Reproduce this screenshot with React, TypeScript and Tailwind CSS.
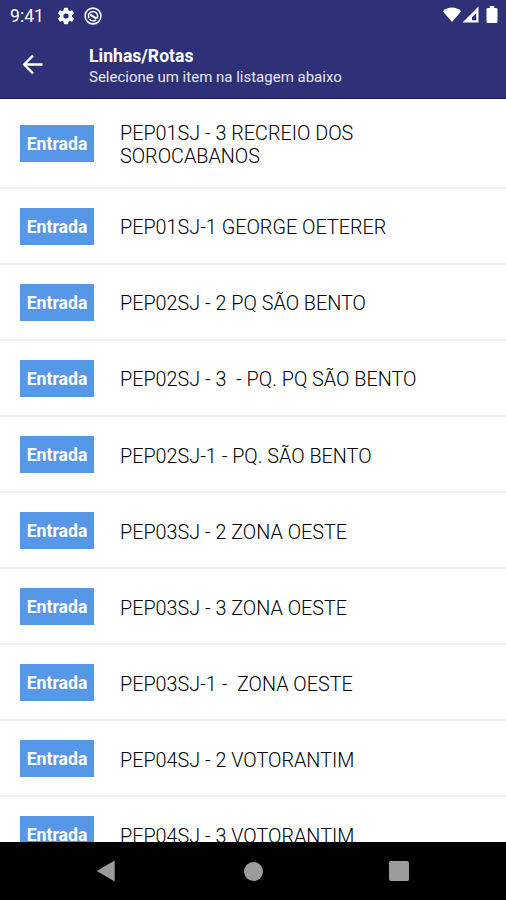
type RouteItem = {
  id: number;
  label: string;
  tall?: boolean;
};

const routes: RouteItem[] = [
  { id: 1, label: "PEP01SJ - 3 RECREIO DOS SOROCABANOS", tall: true },
  { id: 2, label: "PEP01SJ-1 GEORGE OETERER" },
  { id: 3, label: "PEP02SJ - 2 PQ SÃO BENTO" },
  { id: 4, label: "PEP02SJ - 3  - PQ. PQ SÃO BENTO" },
  { id: 5, label: "PEP02SJ-1 - PQ. SÃO BENTO" },
  { id: 6, label: "PEP03SJ - 2 ZONA OESTE" },
  { id: 7, label: "PEP03SJ - 3 ZONA OESTE" },
  { id: 8, label: "PEP03SJ-1 -  ZONA OESTE" },
  { id: 9, label: "PEP04SJ - 2 VOTORANTIM" },
  { id: 10, label: "PEP04SJ - 3 VOTORANTIM" },
];

function StatusBar() {
  return (
    <div className="flex h-8 items-center pl-2.5 pr-2 text-white">
      <span className="w-[46px] text-[17.6px] leading-8">9:41</span>
      <svg className="ml-px size-[18px]" viewBox="1 1 22 22" fill="currentColor">
        <path
          fillRule="evenodd"
          d="M19.43 12.98c.04-.32.07-.64.07-.98s-.03-.66-.07-.98l2.11-1.65a.5.5 0 0 0 .12-.64l-2-3.46a.5.5 0 0 0-.61-.22l-2.49 1a7.3 7.3 0 0 0-1.69-.98l-.38-2.65A.49.49 0 0 0 14 2h-4a.49.49 0 0 0-.49.42l-.38 2.65c-.61.25-1.17.59-1.69.98l-2.49-1a.5.5 0 0 0-.61.22l-2 3.46a.49.49 0 0 0 .12.64l2.11 1.65c-.04.32-.07.65-.07.98s.03.66.07.98l-2.11 1.65a.5.5 0 0 0-.12.64l2 3.46c.12.22.39.3.61.22l2.49-1c.52.4 1.08.73 1.69.98l.38 2.65c.03.24.24.42.49.42h4c.25 0 .46-.18.49-.42l.38-2.65c.61-.25 1.17-.59 1.69-.98l2.49 1c.23.09.49 0 .61-.22l2-3.46a.5.5 0 0 0-.12-.64zM12 15.2a3.2 3.2 0 1 1 0-6.4 3.2 3.2 0 0 1 0 6.4z"
        />
      </svg>
      <svg className="ml-[9px] size-[18px]" viewBox="0 0 18 18" fill="none" stroke="currentColor">
        <circle cx="9" cy="9" r="7.9" strokeWidth="1.6" />
        <path d="M5 11.2A4.6 4.6 0 1 1 13 11.3" strokeWidth="1.5" />
        <path d="M6.2 7.6 12.6 11.6" strokeWidth="2" />
        <path d="M5.6 12.2a4.6 4.6 0 0 0 6.4.6" strokeWidth="1.6" />
      </svg>
      <div className="ml-auto flex items-center pb-[3px]">
        <svg className="h-[17px] w-[20px]" viewBox="0 0 21 17" fill="currentColor">
          <path d="M.8 5C6.2-.1 14.8-.1 20.2 5L10.5 16.5z" />
        </svg>
        <svg className="h-[17px] w-[17px]" viewBox="0 0 17 17">
          <path fill="currentColor" fillRule="evenodd" d="M.5 16.5 16.5.5v16zM10 14.3h4.2V7.5L10 11.3z" />
        </svg>
        <svg className="ml-[7px] h-[17px] w-[12px]" viewBox="0 0 12 17" fill="currentColor">
          <path d="M3.8 0h4.4v2h2Q11.5 2 11.5 3.3v12.2Q11.5 17 10.2 17H1.8Q.5 17 .5 15.5V3.3Q.5 2 1.8 2h2z" />
        </svg>
      </div>
    </div>
  );
}

function Header() {
  return (
    <header className="h-[99px] shrink-0 border-b border-[#171759] bg-[#2e3078] text-white">
      <StatusBar />
      <div className="flex h-[65px] items-center pl-[22px]">
        <button type="button" aria-label="Voltar" className="w-[67px]">
          <svg className="size-[21px]" viewBox="0 0 21 21" fill="none" stroke="currentColor" strokeWidth="2.3">
            <path d="M20.5 10.5H2.2M11 1.6l-8.9 8.9 8.9 8.9" />
          </svg>
        </button>
        <div className="pt-1">
          <h1 className="text-[17.6px] font-bold leading-[22px]">Linhas/Rotas</h1>
          <p className="text-[15px] leading-[21px] text-[#e7e7f4]">Selecione um item na listagem abaixo</p>
        </div>
      </div>
    </header>
  );
}

function RouteRow({ route }: { route: RouteItem }) {
  return (
    <li
      className={`flex shrink-0 items-center border-b-2 border-[#eeeeee] pl-5 pt-[1.2px] ${
        route.tall ? "h-[89.6px]" : "h-[76.1px]"
      }`}
    >
      <span className="flex h-[37px] w-[74px] shrink-0 items-center justify-center bg-[#5797e8] pt-px text-[17.6px] font-bold text-white">
        Entrada
      </span>
      <span className="ml-[26px] w-[310px] whitespace-pre-wrap pt-[3px] text-[19.8px] font-light leading-[23px] text-black">
        {route.label}
      </span>
    </li>
  );
}

function NavBar() {
  return (
    <nav className="flex h-[58px] shrink-0 items-center justify-between bg-black pl-[96px] pr-[97px] text-[#9b9b9b]">
      <svg className="h-[22px] w-[20px]" viewBox="0 0 20 22" fill="currentColor">
        <path d="M18.7.5v21L.8 11z" />
      </svg>
      <span className="ml-px size-[19px] rounded-full bg-[#9b9b9b]" />
      <span className="size-[20px] rounded-xs bg-[#9b9b9b]" />
    </nav>
  );
}

export default function App() {
  return (
    <div className="flex h-[900px] w-[506px] flex-col overflow-hidden bg-white font-['Roboto',sans-serif]">
      <Header />
      <ul className="flex min-h-0 flex-1 flex-col overflow-hidden">
        {routes.map((route) => (
          <RouteRow key={route.id} route={route} />
        ))}
      </ul>
      <NavBar />
    </div>
  );
}
